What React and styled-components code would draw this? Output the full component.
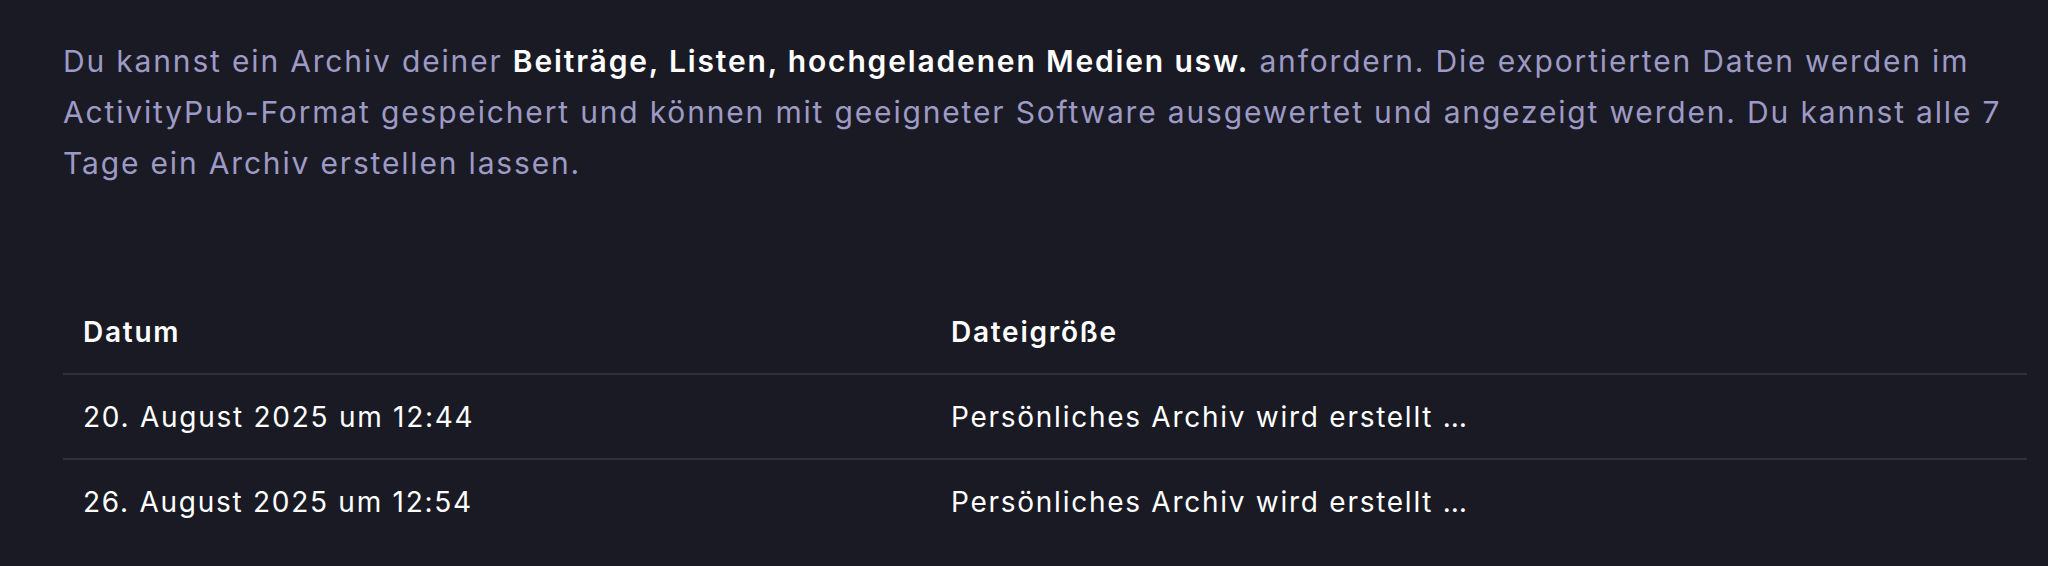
import React from "react";
import styled, { createGlobalStyle } from "styled-components";

const GlobalStyle = createGlobalStyle`
  html, body {
    margin: 0;
    padding: 0;
    background: #1a1a24;
  }
  body {
    font-family: Inter, "Noto Sans", sans-serif;
  }
`;

const Page = styled.div`
  padding: 36px 21px 0 63px;
  min-height: 566px;
  box-sizing: border-box;
  background: #1a1a24;
`;

const Hint = styled.p`
  margin: 0 0 101px;
  font-size: 30px;
  line-height: 51px;
  letter-spacing: 0.061em;
  color: #9e9ac6;
`;

const Strong = styled.strong`
  color: #ffffff;
  font-weight: 600;
`;

const Table = styled.table`
  width: 100%;
  table-layout: fixed;
  border-collapse: collapse;
  color: #ffffff;
  font-size: 28px;
  letter-spacing: 0.062em;
`;

const HeadCell = styled.th`
  text-align: left;
  font-weight: 600;
  height: 83px;
  padding: 0 20px;
  width: ${(p) => p.width || "auto"};
  border-bottom: 2px solid #302f3e;
`;

const Cell = styled.td`
  height: 83px;
  padding: 0 20px;
  font-weight: 400;
  border-bottom: ${(p) => (p.last ? "none" : "2px solid #302f3e")};
`;

const archives = [
  { date: "20. August 2025 um 12:44", size: "Persönliches Archiv wird erstellt …" },
  { date: "26. August 2025 um 12:54", size: "Persönliches Archiv wird erstellt …" },
];

export default function App() {
  return (
    <>
      <GlobalStyle />
      <Page>
        <Hint>
          Du kannst ein Archiv deiner{" "}
          <Strong>Beiträge, Listen, hochgeladenen Medien usw.</Strong>{" "}
          anfordern. Die exportierten Daten werden im ActivityPub-Format
          gespeichert und können mit geeigneter Software ausgewertet und
          angezeigt werden. Du kannst alle 7 Tage ein Archiv erstellen lassen.
        </Hint>
        <Table>
          <thead>
            <tr>
              <HeadCell width="828px">Datum</HeadCell>
              <HeadCell>Dateigröße</HeadCell>
            </tr>
          </thead>
          <tbody>
            {archives.map((a, i) => (
              <tr key={a.date}>
                <Cell last={i === archives.length - 1}>{a.date}</Cell>
                <Cell last={i === archives.length - 1}>{a.size}</Cell>
              </tr>
            ))}
          </tbody>
        </Table>
      </Page>
    </>
  );
}
